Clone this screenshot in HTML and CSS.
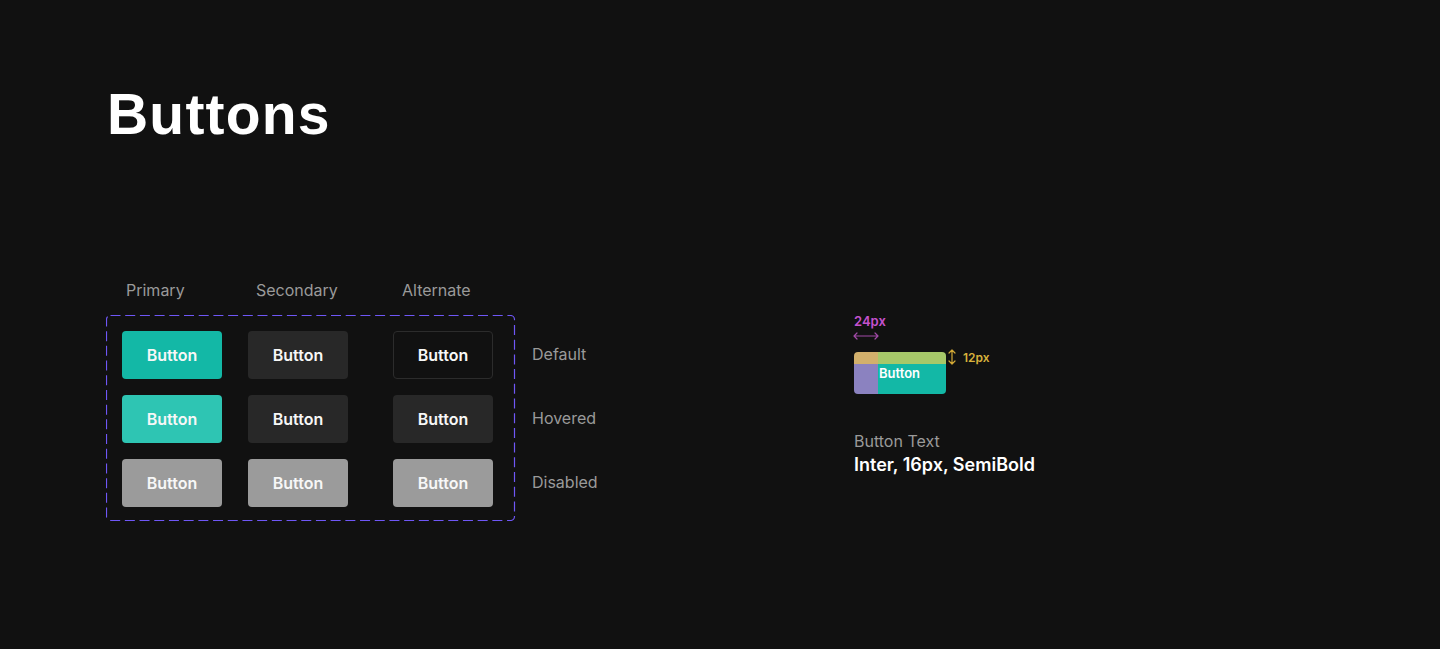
FILE: index.html
```html
<!DOCTYPE html>
<html>
<head>
<meta charset="utf-8">
<link rel="stylesheet" href="styles.css">
</head>
<body>
<div class="page">
  <h1 class="title">Buttons</h1>
  <div class="main">
    <div class="left">
      <div class="col-labels">
        <span class="cl cl-1">Primary</span>
        <span class="cl cl-2">Secondary</span>
        <span class="cl cl-3">Alternate</span>
      </div>
      <div class="board">
        <div class="box">
          <svg class="dash" width="410" height="206" viewBox="0 0 410 206"><rect x="0.5" y="0.5" width="408" height="205" rx="4" ry="4" fill="none" stroke="#6f57f6" stroke-width="1.2" stroke-dasharray="10 4.7"/></svg>
          <div class="grid">
            <div class="btn primary">Button</div>
            <div class="btn secondary">Button</div>
            <div class="btn alternate">Button</div>
            <div class="btn primary-hover">Button</div>
            <div class="btn secondary">Button</div>
            <div class="btn secondary">Button</div>
            <div class="btn disabled">Button</div>
            <div class="btn disabled">Button</div>
            <div class="btn disabled">Button</div>
          </div>
        </div>
        <div class="row-labels">
          <span class="rl">Default</span>
          <span class="rl">Hovered</span>
          <span class="rl">Disabled</span>
        </div>
      </div>
    </div>
    <div class="right">
      <div class="measure-w">24px</div>
      <svg class="harrow" width="26" height="8" viewBox="0 0 26 8"><path d="M1 4H25M4 1L1 4L4 7M22 1L25 4L22 7" fill="none" stroke="#a24aa8" stroke-width="1.2" stroke-linecap="round" stroke-linejoin="round"/></svg>
      <div class="diagram-row">
        <div class="diagram">
          <div class="d-corner"></div>
          <div class="d-top"></div>
          <div class="d-left"></div>
          <div class="d-body">Button</div>
        </div>
        <div class="measure-h">
          <svg class="varrow" width="8" height="16" viewBox="0 0 8 16"><path d="M4 1V15M1 4L4 1L7 4M1 12L4 15L7 12" fill="none" stroke="#d3a936" stroke-width="1.2" stroke-linecap="round" stroke-linejoin="round"/></svg>
          <span>12px</span>
        </div>
      </div>
      <div class="spec-label">Button Text</div>
      <div class="spec-value">Inter, 16px, SemiBold</div>
    </div>
  </div>
</div>
</body>
</html>
```
FILE: styles.css
```css
* { box-sizing: border-box; }
html, body {
  margin: 0;
  padding: 0;
  background: #111111;
  font-family: Inter, "Noto Sans", sans-serif;
}
.page {
  width: 1440px;
  height: 649px;
  padding: 80px 0 0 104px;
  overflow: hidden;
}
.title {
  margin: 0 0 0 3px;
  font-family: "Liberation Sans", Arial, sans-serif;
  font-size: 57px;
  line-height: 68px;
  font-weight: 700;
  color: #ffffff;
  letter-spacing: 1.2px;
}
.main {
  display: flex;
  margin-top: 130px;
  padding-left: 2px;
}
.left {
  width: 748px;
  flex: none;
}
.col-labels {
  display: flex;
  height: 24px;
  align-items: center;
  font-size: 16px;
  color: #9a9a9a;
  padding-left: 20px;
}
.cl-1 { width: 130px; }
.cl-2 { width: 146px; }
.board {
  display: flex;
  align-items: flex-start;
  margin-top: 13px;
}
.box {
  position: relative;
  width: 410px;
  height: 206px;
  padding: 16px 22px 14px 16px;
}
.dash {
  position: absolute;
  left: 0;
  top: 0;
}
.grid {
  display: grid;
  grid-template-columns: 100px 100px 100px;
  grid-auto-rows: 48px;
  column-gap: 26px;
  row-gap: 16px;
}
.grid .btn:nth-child(3n) { margin-left: 19px; }
.btn {
  width: 100px;
  height: 48px;
  border-radius: 4px;
  display: flex;
  align-items: center;
  justify-content: center;
  font-size: 16px;
  font-weight: 600;
  color: #f7f7f7;
}
.primary { background: #13b8a6; }
.primary-hover { background: #2ec5b3; }
.secondary { background: #282828; }
.alternate { background: #111111; border: 1px solid #2c2c2c; }
.disabled { background: #9b9b9b; }
.row-labels {
  display: flex;
  flex-direction: column;
  gap: 16px;
  padding-top: 16px;
  margin-left: 16px;
}
.rl {
  height: 48px;
  display: flex;
  align-items: center;
  font-size: 16px;
  color: #9a9a9a;
  margin-top: -1px;
  margin-bottom: 1px;
}
.right {
  padding-top: 35px;
  display: flex;
  flex-direction: column;
  align-items: flex-start;
}
.measure-w {
  font-size: 13px;
  line-height: 16px;
  font-weight: 600;
  color: #c551cd;
}
.harrow {
  display: block;
  margin-top: 3px;
  margin-left: -1px;
}
.diagram-row {
  display: flex;
  align-items: flex-start;
  margin-top: 12px;
}
.diagram {
  display: grid;
  grid-template-columns: 24px 68px;
  grid-template-rows: 12px 30px;
  width: 92px;
  height: 42px;
  border-radius: 4px;
  overflow: hidden;
}
.d-corner { background: #d2b06c; }
.d-top { background: #a7c869; }
.d-left { background: #8b82c0; }
.d-body {
  background: #13b8a6;
  color: #ffffff;
  font-size: 13px;
  line-height: 17px;
  padding-top: 1px;
  font-weight: 600;
  padding-left: 1px;
}
.measure-h {
  display: flex;
  align-items: center;
  margin-left: 2px;
  margin-top: -3px;
  gap: 7px;
  font-size: 12px;
  font-weight: 600;
  color: #d8b23c;
}
.varrow { display: block; }
.spec-label {
  margin-top: 36px;
  font-size: 16px;
  line-height: 22px;
  color: #9a9a9a;
}
.spec-value {
  margin-top: 1px;
  font-size: 18px;
  line-height: 24px;
  font-weight: 600;
  color: #ffffff;
}
```
